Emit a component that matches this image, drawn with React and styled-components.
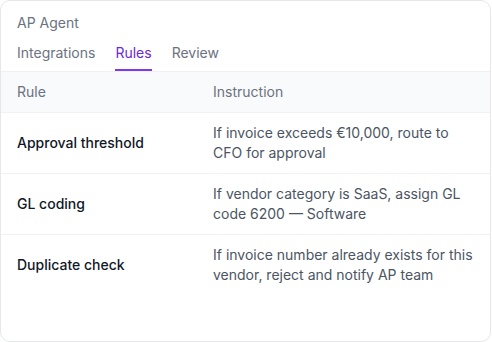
import React from "react"
import styled, { createGlobalStyle } from "styled-components"

const GlobalStyle = createGlobalStyle`
  html, body {
    margin: 0;
    padding: 0;
    background: #ffffff;
  }
  body {
    font-family: Inter, "Noto Sans", sans-serif;
    -webkit-font-smoothing: antialiased;
  }
`

const Card = styled.div`
  box-sizing: border-box;
  width: 491px;
  height: 342px;
  border: 1px solid #e5e7eb;
  border-radius: 10px;
  background: #fff;
  overflow: hidden;
  display: flex;
  flex-direction: column;
`

const Header = styled.div`
  padding: 12px 16px 0;
  border-bottom: 1px solid #eef0f3;
`

const Title = styled.div`
  font-size: 14px;
  line-height: 20px;
  color: #6b7280;
`

const Tabs = styled.div`
  display: flex;
  gap: 20px;
  margin-top: 10px;
`

const Tab = styled.div`
  font-size: 14px;
  line-height: 20px;
  padding-bottom: 6px;
  color: ${p => (p.$active ? "#6d28d9" : "#6b7280")};
  border-bottom: 2px solid ${p => (p.$active ? "#7c3aed" : "transparent")};
`

const Table = styled.div`
  display: grid;
  grid-template-columns: 196px 1fr;
`

const HeadCell = styled.div`
  background: #f9fafb;
  padding: 10px 16px;
  font-size: 14px;
  line-height: 20px;
  color: #6b7280;
  border-bottom: 1px solid #f0f1f3;
`

const Cell = styled.div`
  display: flex;
  align-items: center;
  padding: 10px 16px;
  min-height: 40px;
  font-size: 14px;
  line-height: 20px;
  border-bottom: ${p => (p.$last ? "none" : "1px solid #f0f1f3")};
`

const RuleName = styled(Cell)`
  color: #111827;
  font-weight: 500;
`

const Instruction = styled(Cell)`
  color: #4b5563;
  padding-right: 14px;
`

const rules = [
  { name: "Approval threshold", text: "If invoice exceeds €10,000, route to CFO for approval" },
  { name: "GL coding", text: "If vendor category is SaaS, assign GL code 6200 — Software" },
  { name: "Duplicate check", text: "If invoice number already exists for this vendor, reject and notify AP team" },
]

export default function App() {
  return (
    <>
      <GlobalStyle />
      <Card>
        <Header>
          <Title>AP Agent</Title>
          <Tabs>
            <Tab>Integrations</Tab>
            <Tab $active>Rules</Tab>
            <Tab>Review</Tab>
          </Tabs>
        </Header>
        <Table>
          <HeadCell>Rule</HeadCell>
          <HeadCell>Instruction</HeadCell>
          {rules.map((r, i) => (
            <React.Fragment key={r.name}>
              <RuleName $last={i === rules.length - 1}>{r.name}</RuleName>
              <Instruction $last={i === rules.length - 1}>{r.text}</Instruction>
            </React.Fragment>
          ))}
        </Table>
      </Card>
    </>
  )
}
